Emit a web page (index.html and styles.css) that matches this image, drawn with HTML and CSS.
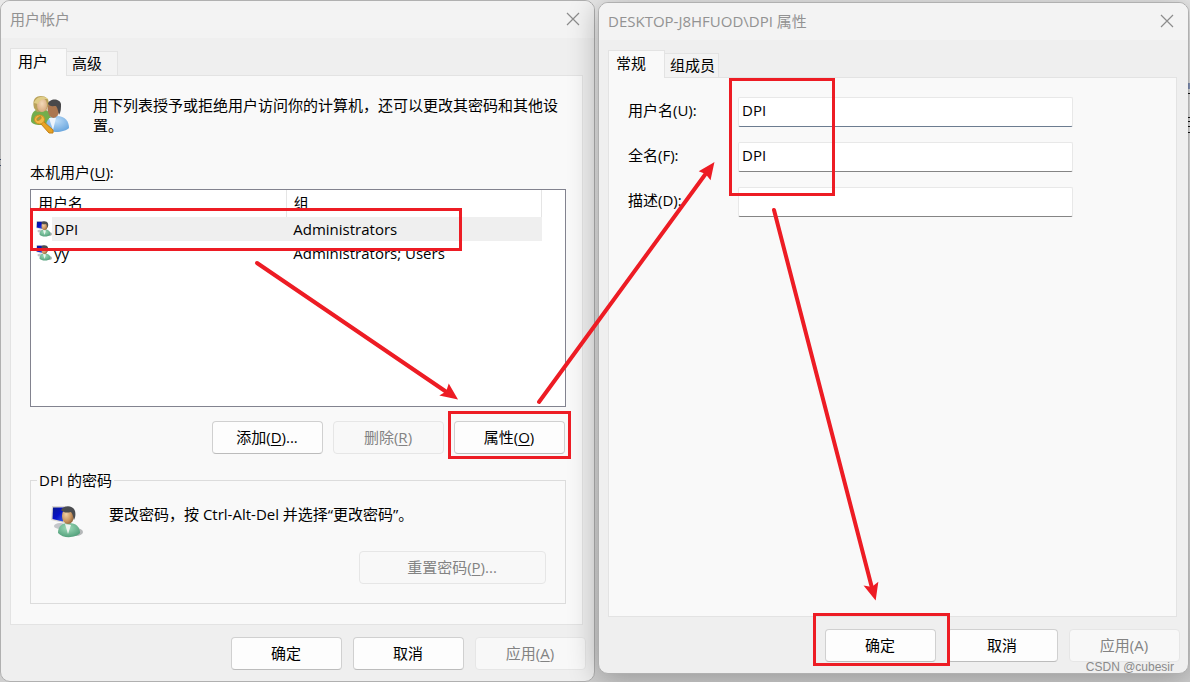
FILE: index.html
```html
<!DOCTYPE html>
<html lang="zh-CN">
<head>
<meta charset="utf-8">
<meta name="viewport" content="width=device-width, initial-scale=1">
<title>用户帐户</title>
<link rel="stylesheet" href="styles.css">
</head>
<body>
<svg class="defs" width="0" height="0" aria-hidden="true">
  <defs>
    <linearGradient id="screen" x1="0" y1="0" x2="1" y2="1">
      <stop offset="0" stop-color="#0a1c8e"/><stop offset=".5" stop-color="#0711c8"/><stop offset="1" stop-color="#3a66e8"/>
    </linearGradient>
    <radialGradient id="face" cx=".35" cy=".4" r=".7">
      <stop offset="0" stop-color="#f0cfa4"/><stop offset=".6" stop-color="#c99560"/><stop offset="1" stop-color="#8b5c35"/>
    </radialGradient>
    <radialGradient id="fair" cx=".5" cy=".4" r=".7">
      <stop offset="0" stop-color="#f3d9b8"/><stop offset="1" stop-color="#d3a376"/>
    </radialGradient>
    <radialGradient id="green" cx=".45" cy=".35" r=".7">
      <stop offset="0" stop-color="#9fdcba"/><stop offset="1" stop-color="#4f9d78"/>
    </radialGradient>
    <radialGradient id="blue" cx=".45" cy=".3" r=".8">
      <stop offset="0" stop-color="#bcdcf8"/><stop offset="1" stop-color="#5f9fda"/>
    </radialGradient>
    <symbol id="pc-user" viewBox="0 0 32 32">
      <ellipse cx="9" cy="20" rx="6" ry="3" fill="#c4c6ca"/>
      <ellipse cx="25" cy="26" rx="7" ry="4" fill="#b5b8b9"/>
      <path d="M1 0 15 0 13 17 0 14z" fill="#dcd9d3"/>
      <path d="M2 1.500 14 1.500 12 15.500 1.500 13z" fill="url(#screen)"/>
      <path d="M7 27c0-7 4-10 11-10s11 4 11 10c-4 5-17 6-22 0z" fill="url(#green)"/>
      <path d="M14 18l3 10 3-9z" fill="#edf3ef"/>
      <ellipse cx="17" cy="10" rx="6" ry="8" fill="url(#face)"/>
      <path d="M10 4c3-5 12-5 14 1 1 4 0 7-1 9-1-3-1-6-3-8-4 1-7 1-10-2z" fill="#4b4d50"/>
    </symbol>
  </defs>
</svg>

<main class="desktop">
  <section class="window window-accounts" aria-labelledby="accounts-title">
    <header class="titlebar">
      <h1 id="accounts-title">用户帐户</h1>
      <button class="close" type="button" aria-label="关闭"><svg viewBox="0 0 14 14"><path d="M1 1 13 13M13 1 1 13"/></svg></button>
    </header>
    <div class="body">
      <nav class="tabs">
        <button class="tab tab-active" type="button">用户</button>
        <button class="tab tab-advanced" type="button">高级</button>
      </nav>
      <div class="panel panel-accounts">
        <div class="intro">
          <svg class="people" viewBox="0 0 40 40" aria-hidden="true">
            <path d="M1 26c0-8 3-12 10-12s10 4 10 11c0 6-19 7-20 1z" fill="#74ad4c"/>
            <path d="M4 13C2 5 5 1 11 1c5 0 8 3 8 8l-3 7-9 1z" fill="#b9a25a"/>
            <ellipse cx="12" cy="10" rx="5" ry="7" fill="url(#fair)"/>
            <path d="M4 8c2-7 10-8 14-4-4 0-8 0-10 5z" fill="#e0cd87"/>
            <path d="M16 34c-1-9 4-13 11-13 8 0 12 5 12 12-3 4-18 6-23 1z" fill="url(#blue)"/>
            <path d="M19 23l4 12 3-12z" fill="#edf4fb"/>
            <ellipse cx="23.500" cy="14" rx="6" ry="9" fill="#ab7750"/>
            <path d="M18 9c1-6 12-6 13 0 0 4 0 8-2 11-1-4-1-6-3-9-3 0-6 1-8-2z" fill="#49484a"/>
            <path d="M13 26 23 35 23 38 19 38 11 29z" fill="#e8a324" stroke="#c27f17"/>
            <ellipse cx="9.500" cy="24.500" rx="5" ry="4.500" fill="#f2b845" stroke="#d08e20"/>
            <ellipse cx="9" cy="23.500" rx="2.500" ry="1.300" fill="#8aa357" stroke="#c28a21" transform="rotate(-35 9 23.500)"/>
          </svg>
          <p>用下列表授予或拒绝用户访问你的计算机，还可以更改其密码和其他设置。</p>
        </div>
        <h2 class="list-label" id="list-label">本机用户(<u>U</u>):</h2>
        <div class="listview">
          <table aria-labelledby="list-label">
            <thead><tr><th scope="col">用户名</th><th scope="col">组</th></tr></thead>
            <tbody>
              <tr class="selected"><td><span class="name"><svg aria-hidden="true"><use href="#pc-user"/></svg><span>DPI</span></span></td><td>Administrators</td></tr>
              <tr><td><span class="name"><svg aria-hidden="true"><use href="#pc-user"/></svg><span>yy</span></span></td><td>Administrators; Users</td></tr>
            </tbody>
          </table>
        </div>
        <div class="actions">
          <button class="btn" type="button">添加(<u>D</u>)...</button>
          <button class="btn" type="button" disabled>删除(<u>R</u>)</button>
          <button class="btn" type="button">属性(<u>O</u>)</button>
        </div>
        <fieldset class="password">
          <legend>DPI 的密码</legend>
          <div class="hint">
            <svg aria-hidden="true"><use href="#pc-user"/></svg>
            <p>要改密码，按 Ctrl-Alt-Del 并选择“更改密码”。</p>
          </div>
          <button class="btn btn-wide" type="button" disabled>重置密码(<u>P</u>)...</button>
        </fieldset>
      </div>
      <footer class="footer">
        <button class="btn" type="button">确定</button>
        <button class="btn" type="button">取消</button>
        <button class="btn" type="button" disabled>应用(<u>A</u>)</button>
      </footer>
    </div>
  </section>

  <section class="window window-properties" aria-labelledby="properties-title">
    <header class="titlebar">
      <h1 id="properties-title">DESKTOP-J8HFUOD\DPI 属性</h1>
      <button class="close" type="button" aria-label="关闭"><svg viewBox="0 0 14 14"><path d="M1 1 13 13M13 1 1 13"/></svg></button>
    </header>
    <div class="body">
      <nav class="tabs">
        <button class="tab tab-active" type="button">常规</button>
        <button class="tab tab-members" type="button">组成员</button>
      </nav>
      <form class="panel panel-form">
        <label for="user">用户名(U):</label><input class="focused" id="user" type="text" value="DPI">
        <label for="full">全名(F):</label><input id="full" type="text" value="DPI">
        <label for="desc">描述(D):</label><input id="desc" type="text">
      </form>
      <footer class="footer">
        <button class="btn" type="button">确定</button>
        <button class="btn" type="button">取消</button>
        <button class="btn" type="button" disabled>应用(A)</button>
      </footer>
    </div>
  </section>

  <svg class="annotations" viewBox="0 0 1190 682" aria-hidden="true">
    <g class="fragments">
      <path d="M1188 84h2M1188 86h2M1188 88h2" stroke="#27407f"/>
      <path d="M1188 93.500h2M1188 117.500h2M1188 121.500h2M1188 126.500h2M1188 132.500h2" stroke="#111"/>
      <path d="M0 159.500h1M0 165.500h1" stroke="#3c4a66"/>
    </g>
    <g class="boxes">
      <rect x="31.500" y="209.500" width="429" height="40"/>
      <rect x="449.500" y="412.500" width="120" height="45"/>
      <rect x="730.500" y="79.500" width="103" height="115"/>
      <rect x="814.500" y="614.500" width="134" height="50"/>
    </g>
    <g class="lines">
      <path d="M257 263 448 393"/>
      <path d="M539 402 707 172"/>
      <path d="M774 210 872 588"/>
    </g>
    <g class="heads">
      <path d="M456 398 449 386 447 392 442 395z"/>
      <path d="M713 164 701 171 706 173 710 178z"/>
      <path d="M875 598 866 587 872 588 877 584z"/>
    </g>
  </svg>
  <span class="watermark">CSDN @cubesir</span>
</main>
</body>
</html>
```
FILE: styles.css
```css
* { box-sizing: border-box; }

body {
  margin: 0;
  color: #000;
  font: 15px/20px "Open Sans", "Noto Sans CJK SC", sans-serif;
}

h1, h2, p { margin: 0; font-size: 15px; font-weight: 400; }
u { text-underline-offset: 2px; }
button, input { font: inherit; color: inherit; }
.defs { position: absolute; }

.desktop {
  position: relative;
  display: grid;
  grid-template-columns: 595fr 591fr;
  column-gap: 3px;
  align-items: start;
  min-height: 100vh;
  padding-right: 1px;
  overflow: hidden;
  background: linear-gradient(#e9e9e9, #d9d9d9 70%, #cfcfcf);
}

.window {
  display: flex;
  flex-direction: column;
  border: 1px solid #b0b0b0;
  border-radius: 10px;
  overflow: hidden;
  background: #efefef;
}
.window-accounts { min-height: 682px; }
.window-properties {
  min-height: 672px;
  margin-top: 2px;
  box-shadow: 0 4px 30px rgba(0, 0, 0, .3);
}

.titlebar {
  display: flex;
  align-items: center;
  justify-content: space-between;
  height: 37px;
  padding: 0 13px 2px 9px;
  background: #f3f3f3;
}
.titlebar h1 { color: #929292; }
.close { width: 16px; height: 16px; padding: 1px; border: 0; background: none; }
.close svg { display: block; width: 14px; height: 14px; fill: none; stroke: #8c8c8c; stroke-width: 1.2; }

.body { display: flex; flex: 1; flex-direction: column; padding: 10px 11px 11px 9px; }
.tabs { display: flex; align-items: flex-end; }
.tab {
  height: 24px;
  padding: 0 4px 1px 5px;
  border: 1px solid #e3e3e3;
  border-bottom: 0;
  border-left: 0;
  background: #f3f3f3;
  text-align: left;
  white-space: nowrap;
}
.tab-active {
  width: 57px;
  height: 28px;
  margin-bottom: -1px;
  padding: 0 7px 3px;
  border-left: 1px solid #e3e3e3;
  background: #f9f9f9;
  z-index: 1;
}
.tab-advanced { width: 51px; }
.tab-members { width: 54px; }

.panel { flex: 1; border: 1px solid #e3e3e3; background: #f9f9f9; }
.panel-accounts { padding: 19px 16px 20px 19px; }
.intro { display: flex; gap: 23px; height: 67px; }
.people { flex: none; width: 40px; height: 40px; }

.listview { height: 218px; margin-top: 7px; border: 1px solid #82838f; background: #fff; }
table { width: 511px; max-width: 100%; table-layout: fixed; border-collapse: collapse; }
th, td { height: 24px; padding: 0 0 0 7px; font-weight: 400; text-align: left; }
th { height: 27px; padding-bottom: 2px; border-right: 1px solid #e5e5e5; }
td:first-child { padding-left: 5px; }
.selected td + td { background: #efefef; }
.selected td:first-child { background: linear-gradient(90deg, transparent 21px, #efefef 21px); }
.name { display: flex; align-items: center; gap: 2px; }
.name svg { width: 16px; height: 16px; }

.actions { display: flex; justify-content: flex-end; gap: 10px; margin-top: 14px; padding-right: 1px; }
.btn {
  width: 111px;
  height: 33px;
  padding: 0 1px 2px 0;
  border: 1px solid #d0d0d0;
  border-bottom-color: #bcbcbc;
  border-radius: 4px;
  background: #fdfdfd;
}
.btn:disabled { border-color: #e6e6e6; background: #f8f8f8; color: #838383; }
.btn-wide { display: block; width: 187px; margin: 13px 0 0 auto; }

.password { height: 134px; margin: 16px 0 0; padding: 6px 19px 19px 20px; border: 1px solid #dcdcdc; }
.password legend { margin-left: -14px; padding: 0 2px; }
.hint { display: flex; gap: 26px; }
.hint svg { flex: none; width: 32px; height: 32px; margin-top: 10px; }
.hint p { padding-top: 8px; }

.footer { display: flex; justify-content: flex-end; gap: 11px; margin: 12px -3px 0 0; }

.panel-form {
  display: grid;
  grid-template-columns: 110px minmax(0, 335px);
  grid-auto-rows: 30px;
  align-content: start;
  row-gap: 15px;
  padding: 19px;
}
.panel-form label { align-self: center; padding-bottom: 4px; }
.panel-form input {
  width: 100%;
  padding: 0 3px 4px;
  border: 1px solid #e8e8e8;
  border-bottom-color: #858585;
  border-radius: 2px;
  outline: 0;
  background: #fff;
}
.panel-form .focused { border-bottom-color: #6c7c90; }

.annotations { position: absolute; top: 0; left: 0; width: 100%; pointer-events: none; }
.boxes { fill: none; stroke: #ed1c24; stroke-width: 3; }
.lines { fill: none; stroke: #ed1c24; stroke-width: 4; stroke-linecap: round; }
.heads { fill: #ed1c24; stroke: #ed1c24; stroke-width: 2; }

.watermark {
  position: absolute;
  right: 16px;
  bottom: 5px;
  color: #8a8a8a;
  font: 12px/20px "Liberation Sans", sans-serif;
}
```
